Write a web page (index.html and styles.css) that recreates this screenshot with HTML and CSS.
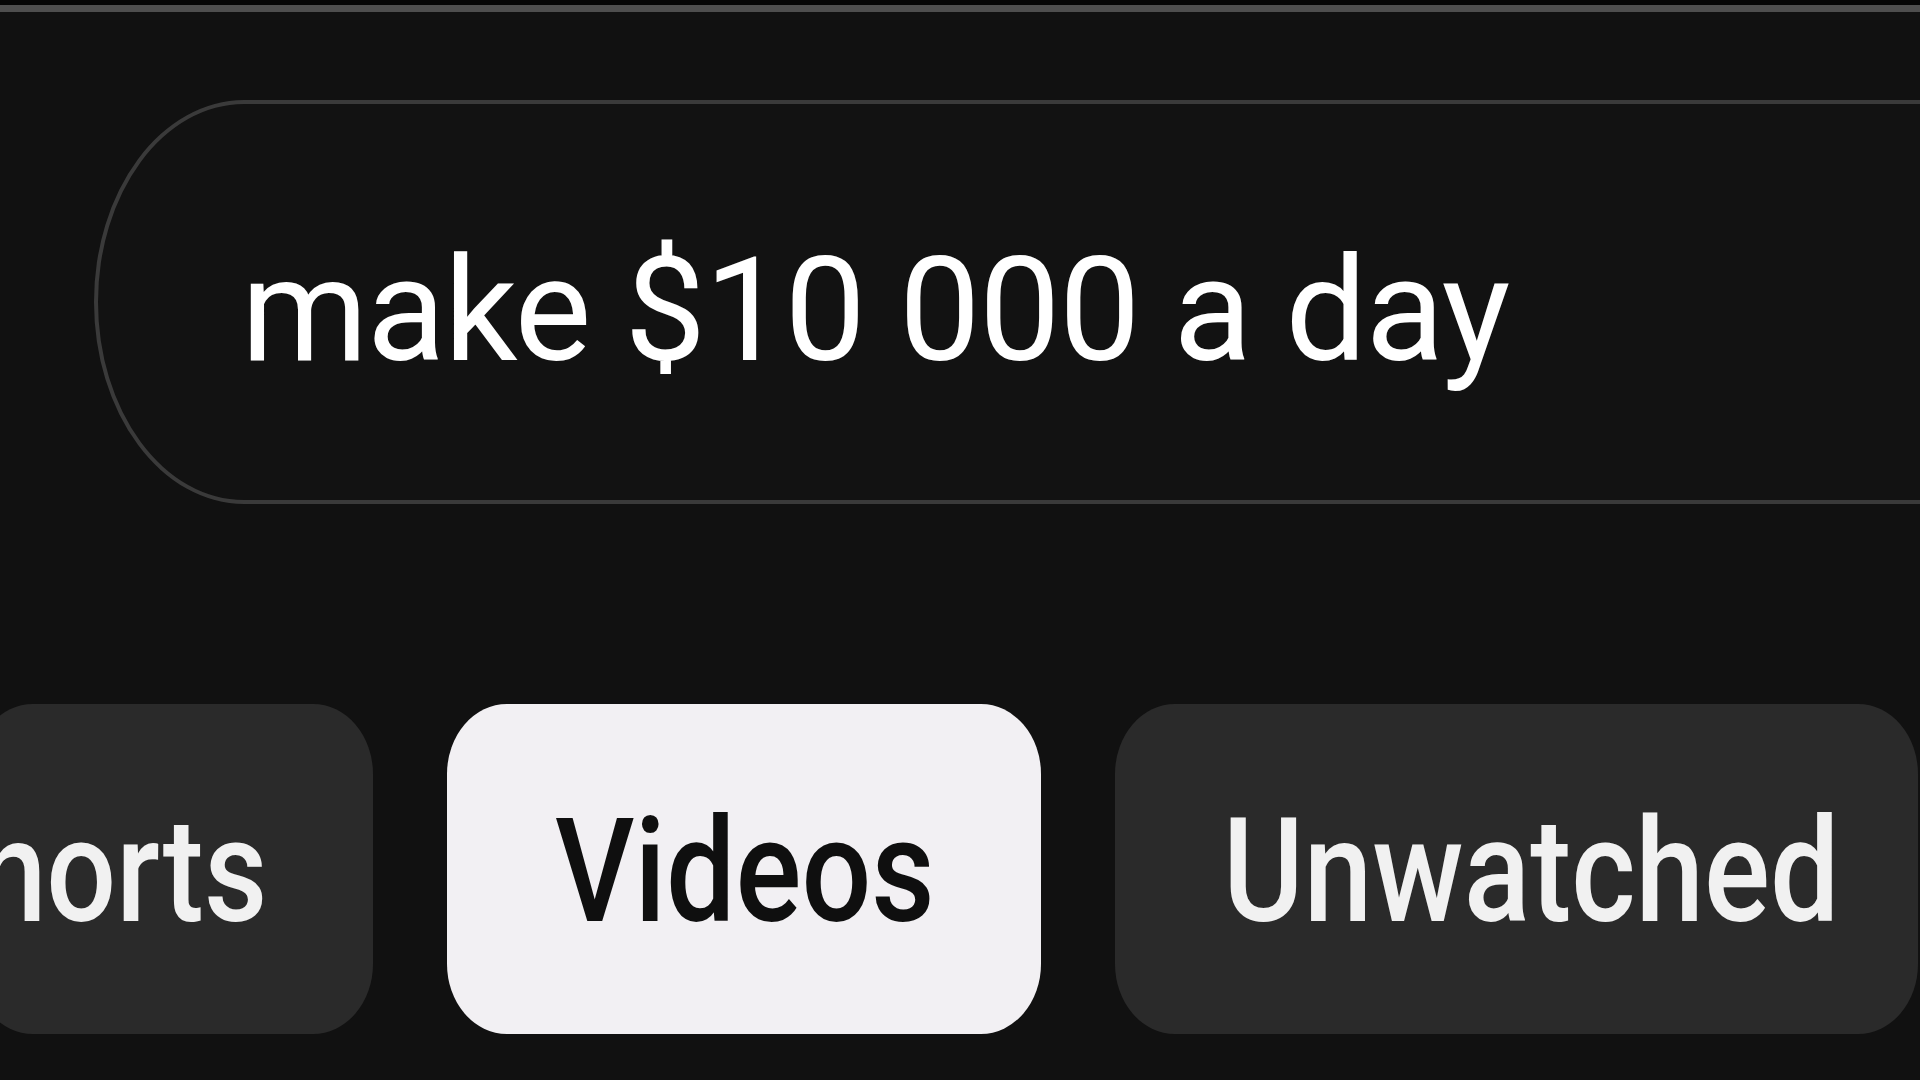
FILE: index.html
```html
<!DOCTYPE html>
<html lang="en">

<head>
    <meta charset="UTF-8" />
    <meta name="viewport" content="width=device-width, initial-scale=1.0" />
    <title>Search</title>
    <link rel="stylesheet" href="styles.css">
</head>

<body>
    <div class="topbar"></div>

    <main class="page">
        <div class="search">
            <span class="query">make $10 000 a day</span>
        </div>

        <div class="chips">
            <span class="chip chip-shorts"><span class="label">Shorts</span></span>
            <span class="chip chip-videos active"><span class="label">Videos</span></span>
            <span class="chip chip-unwatched"><span class="label">Unwatched</span></span>
        </div>
    </main>
</body>

</html>
```

FILE: styles.css
```css
* {
    box-sizing: border-box;
}

html,
body {
    margin: 0;
    height: 100%;
}

body {
    background: #111111;
    font-family: Roboto, "Noto Sans", sans-serif;
    overflow: hidden;
}

.topbar {
    height: 12px;
    background: #050505;
    border-top: 4px solid #050505;
    border-bottom: 7px solid #4e4e4e;
}

.page {
    padding-top: 88px;
}

.search {
    display: flex;
    align-items: center;
    height: 404px;
    margin-left: 94px;
    margin-right: -200px;
    border: 4px solid #3a3a3a;
    border-radius: 150px / 50%;
    padding-left: 143px;
    padding-top: 17px;
    background: #121212;
}

.query {
    font-size: 145px;
    line-height: 1;
    letter-spacing: -1.5px;
    color: #ffffff;
}

.chips {
    display: flex;
    gap: 74px;
    margin-top: 200px;
    white-space: nowrap;
}

.chip {
    display: flex;
    align-items: center;
    flex-shrink: 0;
    height: 330px;
    padding: 5px 0 0 108px;
    border-radius: 60px / 70px;
    background: #2a2a2a;
    color: #f1f1f1;
    font-size: 145px;
    font-weight: 500;
    line-height: 1;
    overflow: hidden;
}

.label {
    display: inline-block;
    flex-shrink: 0;
    transform: scaleX(0.85);
    transform-origin: left center;
}

.chip-shorts {
    width: 400px;
    margin-left: -27px;
    padding-left: 0;
    padding-right: 106px;
    justify-content: flex-end;
}

.chip-shorts .label {
    transform-origin: right center;
}

.chip-videos {
    width: 594px;
}

.chip-unwatched {
    width: 803px;
}

.chip.active {
    background: #f2f0f3;
    color: #0f0f0f;
}
```
